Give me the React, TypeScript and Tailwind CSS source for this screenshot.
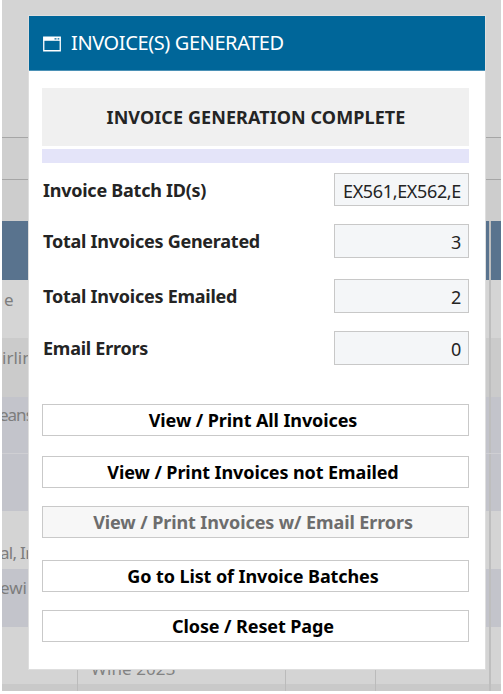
const rows = [
  { style: 'mt-[10px] h-[33px]', label: 'Invoice Batch ID(s)', value: 'EX561,EX562,E' },
  { style: 'mt-[18px] h-[34px]', label: 'Total Invoices Generated', value: '3' },
  { style: 'mt-[21px] h-[34px]', label: 'Total Invoices Emailed', value: '2' },
  { style: 'mt-[18px] h-[34px]', label: 'Email Errors', value: '0' },
];

const actions = [
  { label: 'View / Print All Invoices', style: 'mt-[39px] h-8' },
  { label: 'View / Print Invoices not Emailed', style: 'mt-5 h-8' },
  { label: 'View / Print Invoices w/ Email Errors', style: 'mt-[18px] h-8', disabled: true },
  { label: 'Go to List of Invoice Batches', style: 'mt-[22px] h-8' },
  { label: 'Close / Reset Page', style: 'mt-[18px] h-8' },
];

const bands = [
  { style: 'h-[138px] border-b border-[#a6a6a6] bg-[#d4d4d4]', text: '', pad: '' },
  { style: 'h-[42px] border-b border-[#a6a6a6] bg-[#cfcfcf]', text: '', pad: '' },
  { style: 'h-[41px] bg-[#cdcdcd]', text: '', pad: '' },
  { style: 'h-[59px] bg-[#59738e]', text: '', pad: '' },
  { style: 'h-[58px] bg-[#d5d5d5]', text: 'e', pad: 'pl-[2px] pt-[8px]' },
  { style: 'h-[59px] bg-[#cbcbcb]', text: 'irlin', pad: 'pt-[8px]' },
  { style: 'h-[57px] border-b border-[#cfcfd3] bg-[#c3c4cb]', text: 'eans', pad: 'pt-[6px] -indent-[3px] tracking-[-1px]' },
  { style: 'h-[57px] bg-[#c3c4cb]', text: '', pad: '' },
  { style: 'h-[58px] bg-[#d4d4d4]', text: 'al, In', pad: 'pt-[30px] -indent-[2px] tracking-[-0.7px]' },
  { style: 'h-[58px] bg-[#c3c4cb]', text: 'ewi', pad: 'pt-[7px] -indent-[2px]' },
  { style: 'h-[57px] bg-[#d4d4d4]', text: '', pad: '' },
  { style: 'h-[7px] bg-[#c9c9c9]', text: '', pad: '' },
];

function WindowIcon() {
  return (
    <svg width="18" height="16" viewBox="0 0 18 16" fill="none" className="mt-[2px] shrink-0">
      <path d="M.75 1.25h16.5v13.5H.75z" stroke="white" strokeWidth="1.3" />
      <path d="M.5 1h17v3.8H.5z" fill="white" />
      <path d="M11.5 2.9h2M14.6 2.9h1.7" stroke="#006699" strokeWidth="1.1" />
    </svg>
  );
}

function PageBehind() {
  return (
    <div className="ml-[2px] h-[691px] w-[499px] overflow-hidden text-[17px] leading-6 text-[#7d7d7d]">
      {bands.map((band, i) => (
        <div key={i} className={`flex justify-between ${band.style}`}>
          <span className={`w-[27px] overflow-hidden whitespace-nowrap ${band.pad}`}>{band.text}</span>
          {i > 2 && <span className="mr-[10px] w-[2px] bg-[#bebebe]" />}
        </div>
      ))}
    </div>
  );
}

export default function App() {
  return (
    <div className="relative h-[694px] w-[503px] overflow-hidden bg-white font-['Noto_Sans','Open_Sans',sans-serif]">
      <PageBehind />
      <div className="absolute left-[77px] top-[657px] flex h-[34px] w-[299px] justify-between border-x border-[#bbbbbb] text-[17px] leading-6 text-[#828282]">
        <span className="w-[144px] pl-[13px] tracking-[0.1px]">Wine 2023</span>
        <span className="mr-[89px] w-px bg-[#bbbbbb]" />
      </div>
      <section className="absolute left-[29px] top-[16px] h-[653px] w-[456px] bg-white text-[#242424] shadow-[0_0_0_1px_#dedede]">
        <header className="flex h-[55px] items-center gap-[10px] border-b border-[#4b91b6] bg-[#006699] pl-[14px] text-white">
          <WindowIcon />
          <h1 className="whitespace-nowrap text-[20px] leading-none tracking-[-0.4px]">INVOICE(S) GENERATED</h1>
        </header>
        <main className="ml-[13px] w-[427px] pt-[17px]">
          <h2 className="flex h-[58px] items-center justify-center whitespace-nowrap bg-[#f0f0f0] pl-px text-[18px] font-bold tracking-[0.08px]">INVOICE GENERATION COMPLETE</h2>
          <div className="mt-[3px] h-[14px] bg-[#e4e4f9]" />
          {rows.map((row) => (
            <div key={row.label} className={`flex items-center justify-between ${row.style}`}>
              <label className="whitespace-nowrap pl-px text-[18px] font-bold leading-none tracking-[-0.25px]">{row.label}</label>
              <output className="flex h-full w-[135px] items-center justify-end overflow-hidden whitespace-nowrap border border-[#c8c8c8] bg-[#f4f6f8] pr-[7px] pt-[2px] text-[18px] leading-none tracking-[-0.35px]">{row.value}</output>
            </div>
          ))}
          {actions.map((action) => (
            <button
              key={action.label}
              disabled={action.disabled}
              className={`flex w-full items-center justify-center whitespace-nowrap border border-[#c9c9c9] pr-[5px] text-[18px] font-bold leading-none tracking-[-0.1px] ${action.style} ${action.disabled ? 'bg-[#f7f7f7] text-[#6d6d6d]' : 'bg-white text-black'}`}
            >
              {action.label}
            </button>
          ))}
        </main>
      </section>
    </div>
  );
}
